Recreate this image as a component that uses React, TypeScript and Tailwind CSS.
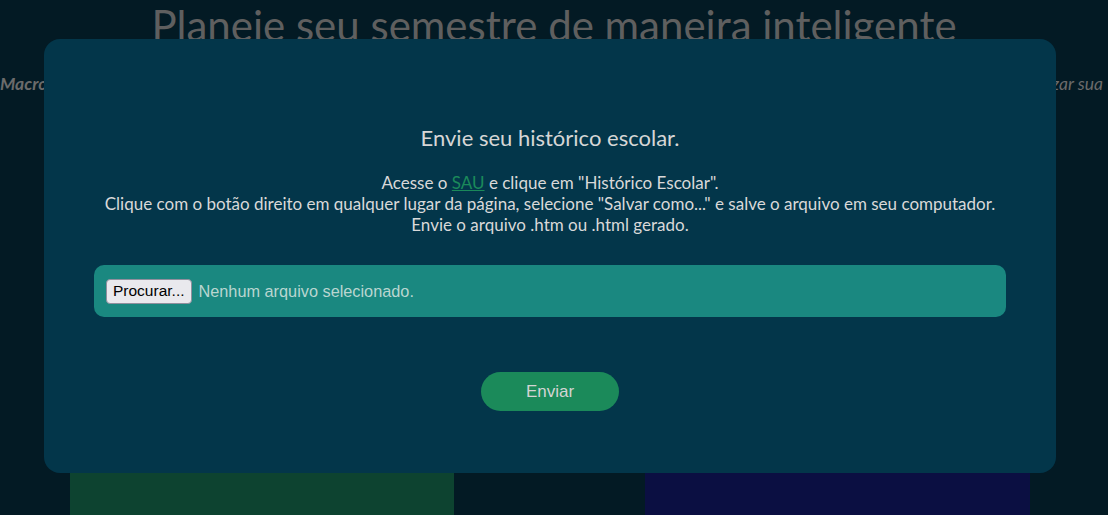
// ─── Upload Modal over dimmed planner page ───────────────────────────────────

const lato = { fontFamily: '"Lato", "Noto Sans", sans-serif' };

function FakeFileInput() {
  return (
    <div className="flex h-[52px] w-full items-center gap-[7px] rounded-[10px] bg-[#1a8880] px-3 font-['Liberation_Sans',sans-serif]">
      <span className="flex h-[25px] items-center rounded-[4px] border border-[#8f8f9d] bg-[#e9e9ed] px-[6px] text-[15.5px] text-black">
        Procurar...
      </span>
      <span className="text-[16.3px] text-[#b9d6d0]">Nenhum arquivo selecionado.</span>
    </div>
  );
}

export default function App() {
  return (
    <div className="relative h-[515px] w-[1108px] overflow-hidden bg-[#031a24]" style={lato}>
      {/* Background page (dimmed) */}
      <h1 className="pt-[1px] text-center text-[42px] leading-[48px] text-[#5f5f5f]">
        Planeie seu semestre de maneira inteligente
      </h1>
      <div className="mt-[22px] flex justify-between whitespace-nowrap text-[17.5px] italic text-[#6b6b6b]">
        <span className="font-bold">Macro planejamento</span>
        <span className="pr-[5px]">para organizar sua</span>
      </div>
      <div className="mt-[368px] flex h-[60px] pl-[70px]">
        <div className="w-[384px] bg-[#0d4330]" />
        <div className="w-[191px]" />
        <div className="w-[385px] bg-[#0b0f42]" />
      </div>

      {/* Modal */}
      <div className="absolute left-[44px] top-[39px] flex h-[434px] w-[1012px] flex-col items-center rounded-2xl bg-[#03364a] px-[50px] pt-[85px]">
        <h2 className="text-[22px] leading-[28px] text-[#d6d6d6]">Envie seu histórico escolar.</h2>
        <p className="mt-[20px] text-center text-[17px] leading-[21px] text-[#d9d9d9]">
          Acesse o{' '}
          <a href="#" className="text-[#1b8a5a] underline">
            SAU
          </a>{' '}
          e clique em "Histórico Escolar".
          <br />
          Clique com o botão direito em qualquer lugar da página, selecione "Salvar como..." e salve o arquivo em seu computador.
          <br />
          Envie o arquivo .htm ou .html gerado.
        </p>
        <div className="mt-[30px] w-full">
          <FakeFileInput />
        </div>
        <button className="mt-[55px] h-[39px] w-[138px] rounded-full bg-[#1b8a5a] font-['Liberation_Sans',sans-serif] text-[17px] text-[#d4d4d4]">
          Enviar
        </button>
      </div>
    </div>
  );
}
